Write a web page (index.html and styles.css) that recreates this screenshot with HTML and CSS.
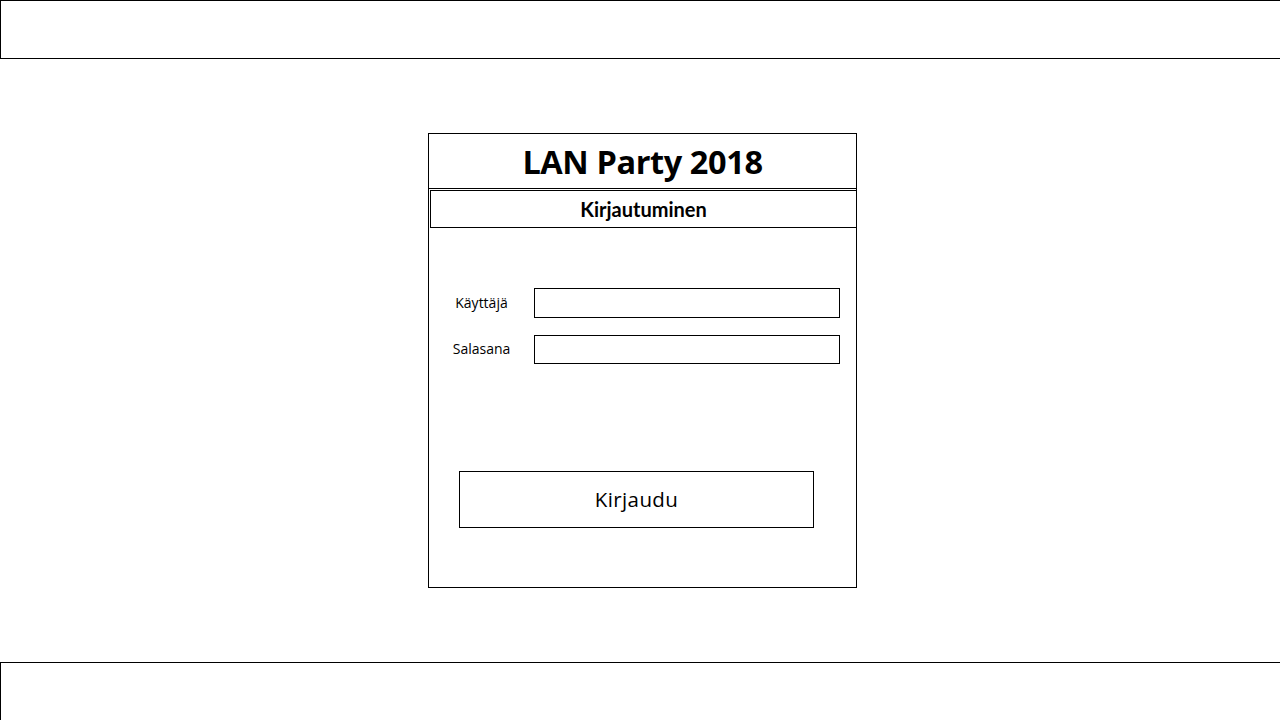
FILE: index.html
```html
<!DOCTYPE html>
<html lang="fi">
<head>
<meta charset="utf-8">
<title>LAN Party 2018</title>
<link rel="stylesheet" href="styles.css">
</head>
<body>
<div class="page">
  <header class="top-bar"></header>
  <main class="card">
    <div class="card-title">LAN Party 2018</div>
    <div class="card-sub">Kirjautuminen</div>
    <form class="login-form">
      <div class="field">
        <label class="field-label" for="user">Käyttäjä</label>
        <input class="field-input" id="user" type="text">
      </div>
      <div class="field">
        <label class="field-label" for="pass">Salasana</label>
        <input class="field-input field-input-short" id="pass" type="password">
      </div>
      <button class="login-btn" type="button">Kirjaudu</button>
    </form>
  </main>
  <footer class="bottom-bar"></footer>
</div>
</body>
</html>
```
FILE: styles.css
```css
html, body {
  margin: 0;
  padding: 0;
  background: #fff;
  overflow: hidden;
}
.page {
  width: 1280px;
  height: 720px;
  overflow: hidden;
  display: flex;
  flex-direction: column;
  font-family: "Open Sans", "Noto Sans", sans-serif;
  color: #000;
}
.top-bar {
  flex: none;
  box-sizing: border-box;
  width: 1300px;
  height: 59px;
  border: 1px solid #000;
}
.card {
  flex: none;
  box-sizing: border-box;
  margin: 74px 0 0 428px;
  width: 429px;
  height: 455px;
  border: 1px solid #000;
  display: flex;
  flex-direction: column;
}
.card-title {
  box-sizing: border-box;
  height: 55px;
  border-bottom: 1px solid #000;
  display: flex;
  align-items: center;
  justify-content: center;
  font-weight: 700;
  font-size: 32.5px;
  letter-spacing: -0.4px;
  padding-top: 1px;
}
.card-sub {
  box-sizing: border-box;
  margin: 1px -1px 0 1px;
  height: 38px;
  border: 1px solid #000;
  display: flex;
  align-items: center;
  justify-content: center;
  font-family: "Lato", sans-serif;
  font-weight: 700;
  font-size: 20px;
}
.login-form {
  display: flex;
  flex-direction: column;
  padding-top: 60px;
}
.field {
  display: flex;
  align-items: center;
  margin-bottom: 17px;
}
.field-label {
  width: 105px;
  text-align: center;
  font-size: 14px;
  padding-bottom: 2px;
}
.field-input {
  box-sizing: border-box;
  width: 306px;
  height: 30px;
  margin: 0;
  border: 1px solid #000;
  border-radius: 0;
  outline: none;
  background: #fff;
}
.field-input-short {
  height: 29px;
}
.login-btn {
  box-sizing: border-box;
  margin: 90px 0 0 30px;
  width: 355px;
  height: 57px;
  border: 1px solid #000;
  border-radius: 0;
  background: #fff;
  font-family: "Open Sans", "Noto Sans", sans-serif;
  font-size: 20.5px;
  color: #000;
  letter-spacing: 0.4px;
  padding: 0 0 2px 0;
}
.bottom-bar {
  flex: none;
  box-sizing: border-box;
  margin-top: 74px;
  width: 1300px;
  height: 100px;
  border: 1px solid #000;
}
```
